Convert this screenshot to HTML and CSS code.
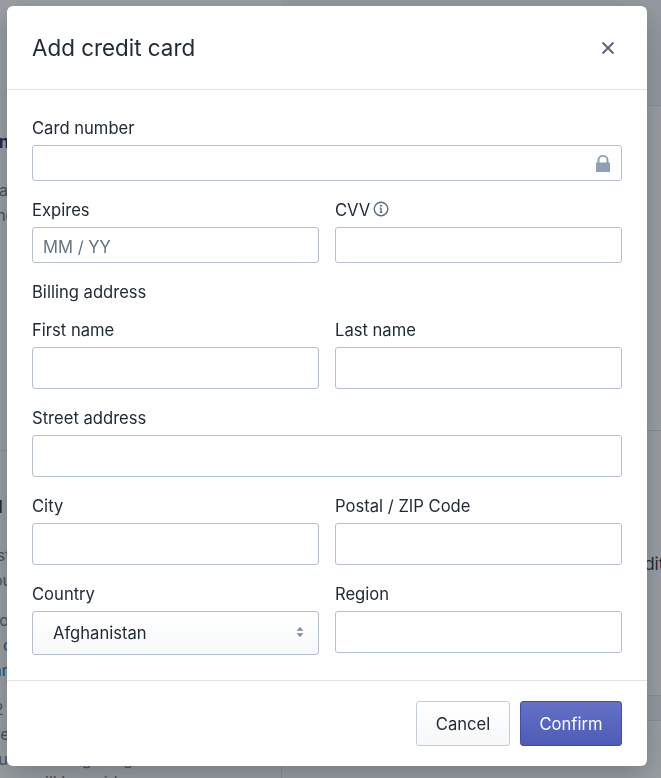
FILE: index.html
```html
<!DOCTYPE html>
<html lang="en">
  <head>
    <meta charset="UTF-8" />
    <title>Add credit card</title>
    <link rel="stylesheet" href="styles.css">
  </head>
  <body>
    <div class="page">
      <div class="page-left">
        <div class="page-card first">
          <h3>Payment information</h3>
          <p>Add cards and more</p>
          <p>Manage it now</p>
        </div>
        <div class="page-card second">
          <h3>Billing deal</h3>
          <p>View your statement</p>
          <p>Check if your account</p>
          <p class="gap-b">Use your points</p>
          <p class="link">Read more or ask</p>
          <p class="link">Check balance</p>
          <p class="gap-c">Your last 12 months</p>
          <p>Invoice here</p>
          <p>Check about our billing usage</p>
          <p class="tail">will be paid</p>
        </div>
      </div>
      <div class="page-right">
        <div class="page-top"></div>
        <div class="page-section"></div>
        <p class="edge-text">Additional</p>
        <div class="edge-band"></div>
        <h3 class="invoices">Invoices</h3>
      </div>
    </div>

    <div class="overlay">
      <div class="modal">
        <div class="modal-header">
          <h2>Add credit card</h2>
          <button class="close" aria-label="Close">
            <svg width="14" height="14" viewBox="0 0 14 14"><path d="M1.500 1.500l11 11M12.500 1.500l-11 11" /></svg>
          </button>
        </div>

        <form class="modal-body">
          <div class="field">
            <label>Card number</label>
            <div class="input short with-icon">
              <svg width="14" height="17" viewBox="0 0 14 17"><path d="M0 7.500h1.500V5a5.500 5 0 0 1 11 0v2.500H14V17H0zM3.500 7.500h7V5a3.500 3.200 0 0 0-7 0z" /></svg>
            </div>
          </div>

          <div class="row">
            <div class="field">
              <label>Expires</label>
              <div class="input short placeholder">MM / YY</div>
            </div>
            <div class="field">
              <label>CVV
                <svg class="info" width="16" height="16" viewBox="0 0 16 16">
                  <circle cx="8" cy="8" r="6.800" />
                  <path d="M8 7.200v4M6.800 11.200h2.400M6.800 7.200H8" />
                  <circle class="dot" cx="8" cy="4.800" r="1" />
                </svg>
              </label>
              <div class="input short"></div>
            </div>
          </div>

          <div class="section-label">Billing address</div>

          <div class="row">
            <div class="field">
              <label>First name</label>
              <div class="input"></div>
            </div>
            <div class="field">
              <label>Last name</label>
              <div class="input"></div>
            </div>
          </div>

          <div class="field">
            <label>Street address</label>
            <div class="input"></div>
          </div>

          <div class="row">
            <div class="field">
              <label>City</label>
              <div class="input"></div>
            </div>
            <div class="field">
              <label>Postal / ZIP Code</label>
              <div class="input"></div>
            </div>
          </div>

          <div class="row">
            <div class="field">
              <label>Country</label>
              <div class="select">
                Afghanistan
                <svg width="8" height="12" viewBox="0 0 8 12"><path d="M4 1l3.500 3.800h-7zM4 11L.5 7.200h7z" /></svg>
              </div>
            </div>
            <div class="field">
              <label>Region</label>
              <div class="input"></div>
            </div>
          </div>
        </form>

        <div class="modal-footer">
          <button class="btn cancel">Cancel</button>
          <button class="btn primary">Confirm</button>
        </div>
      </div>
    </div>
  </body>
</html>
```

FILE: styles.css
```css
* {
  box-sizing: border-box;
}

html,
body {
  height: 100%;
}

body {
  margin: 0;
  overflow: hidden;
  font-family: Inter, "Liberation Sans", sans-serif;
  color: #212b36;
}

/* page behind the modal */
.page {
  display: flex;
  height: 778px;
  margin-left: -83px;
  overflow: hidden;
  background: #fff;
}

.page-left {
  flex: none;
  width: 365px;
}

.page-card {
  font-size: 16px;
  line-height: 25px;
  color: #637381;
}

.page-card h3 {
  margin: 0;
  font-size: 17px;
  font-weight: 700;
  color: #212b36;
}

.page-card p {
  margin: 0;
  white-space: nowrap;
}

.first {
  height: 451px;
  padding-top: 130px;
  border-bottom: 1px solid #dfe3e8;
}

.first h3 {
  margin-bottom: 23px;
}

.second {
  height: 327px;
  padding-top: 44px;
  border-right: 1px solid #dfe3e8;
}

.second h3 {
  margin-bottom: 23px;
  margin-left: -5px;
}

.second .gap-b {
  margin-top: 15px;
}

.second .gap-c {
  margin-top: 14px;
}

.second .link {
  color: #006fbb;
}

.second .tail {
  margin-top: -2px;
  padding-left: 115px;
}

.page-right {
  flex: 1;
  min-width: 0;
}

.page-top {
  height: 106px;
  background: #f4f6f8;
  border-bottom: 1px solid #dfe3e8;
}

.page-section {
  height: 325px;
  border-bottom: 1px solid #dfe3e8;
}

.edge-text {
  margin: 123px 0 0 340px;
  font-size: 17px;
  line-height: 20px;
  white-space: nowrap;
  color: #212b36;
}

.edge-band {
  height: 26px;
  margin-top: 121px;
  background: #f4f6f8;
  border-top: 1px solid #dfe3e8;
  border-bottom: 1px solid #dfe3e8;
}

.invoices {
  margin: 22px 0 0 25px;
  font-size: 25px;
  line-height: 28px;
  font-weight: 500;
}

.overlay {
  position: fixed;
  inset: 0;
  padding: 6px 14px 12px 7px;
  background: rgba(33, 43, 54, 0.45);
}

/* modal */
.modal {
  display: flex;
  flex-direction: column;
  height: 760px;
  overflow: hidden;
  background: #fff;
  border-radius: 6px;
  box-shadow: 0 10px 30px rgba(33, 43, 54, 0.3);
}

.modal-header {
  display: flex;
  align-items: center;
  justify-content: space-between;
  height: 84px;
  padding: 0 32px 0 25px;
  border-bottom: 1px solid #dfe3e8;
}

.modal-header h2 {
  margin: 0;
  font-size: 22.400px;
  font-weight: 400;
  color: #212b36;
}

.close {
  display: flex;
  padding: 0;
  background: none;
  border: 0;
}

.close svg path {
  fill: none;
  stroke: #56657a;
  stroke-width: 1.800;
}

.modal-body {
  flex: 1;
  padding: 26px 25px 0;
}

.row {
  display: grid;
  grid-template-columns: 287px 287px;
  gap: 16px;
}

.field {
  margin-bottom: 17px;
}

label,
.section-label {
  display: flex;
  align-items: center;
  height: 24px;
  margin-bottom: 5px;
  font-size: 16.600px;
  color: #212b36;
}

.section-label {
  margin-bottom: 14px;
}

.info {
  margin-left: 3px;
  margin-top: -3px;
}

.info circle,
.info path {
  fill: none;
  stroke: #5b6b80;
  stroke-width: 1.400;
}

.info .dot {
  fill: #5b6b80;
  stroke: none;
}

.input {
  height: 42px;
  background: #fff;
  border: 1px solid #b5c0cc;
  border-radius: 3px;
}

.input.short {
  height: 36px;
}

.placeholder {
  padding: 0 10px;
  font-size: 16.600px;
  line-height: 38px;
  color: #637381;
}

.with-icon {
  display: flex;
  align-items: center;
  justify-content: flex-end;
  padding-right: 11px;
}

.with-icon svg {
  fill: #8fa0b3;
}

.select {
  display: flex;
  align-items: center;
  justify-content: space-between;
  height: 44px;
  padding: 0 14px 0 20px;
  font-size: 16.600px;
  color: #212b36;
  background: linear-gradient(#fff, #f6f8fa);
  border: 1px solid #b5c0cc;
  border-radius: 3px;
}

.select svg {
  fill: #7d8a99;
  margin-top: -3px;
}

.modal-footer {
  display: flex;
  justify-content: flex-end;
  gap: 10px;
  height: 86px;
  padding: 20px 25px 0;
  border-top: 1px solid #dfe3e8;
}

.btn {
  height: 45px;
  padding: 0;
  font-family: inherit;
  font-size: 16.600px;
  color: #212b36;
  background: linear-gradient(#fff, #f6f8fa);
  border: 1px solid #c4cdd5;
  border-radius: 3px;
}

.btn.cancel {
  width: 94px;
}

.btn.primary {
  width: 102px;
  color: #fff;
  background: linear-gradient(#6371c7, #4f5bb5);
  border-color: #3f4eae;
}
```
